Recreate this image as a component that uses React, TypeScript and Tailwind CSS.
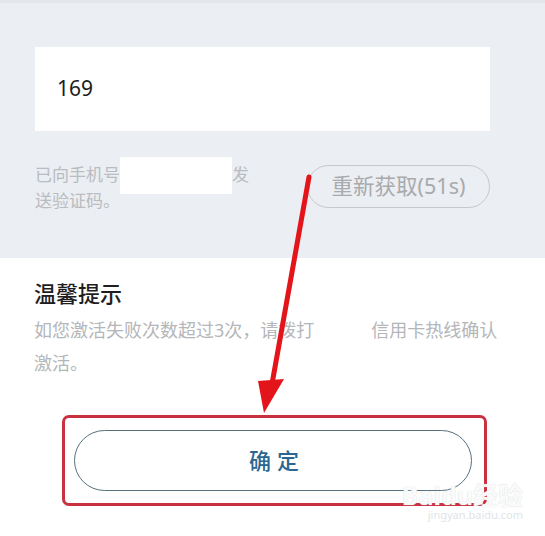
import React from "react";

export default function App() {
  return (
    <div
      className="relative w-[545px] h-[536px] overflow-hidden bg-white"
      style={{ fontFamily: '"Noto Sans", "Noto Sans CJK SC", sans-serif' }}
    >
      {/* verification code section */}
      <section className="h-[258px] bg-[#ebeef2] border-t-[3px] border-[#e4e6e9] pt-[44px] pl-[35px] pr-[55px]">
        <div className="h-[84px] bg-white flex items-center pl-[22px]">
          <span className="text-[21px] text-[#1c1c1c]">169</span>
        </div>

        <div className="mt-[31px] flex justify-between items-start">
          <div className="text-[17px] leading-[26px] text-[#b9bcc0]">
            <div className="flex items-center">
              <span>已向手机号</span>
              <span className="w-[112px] h-[37px] -my-[6px] bg-white" />
              <span>发</span>
            </div>
            <div>送验证码。</div>
          </div>
          <button className="mt-[3px] w-[183px] h-[43px] rounded-full border-[1.5px] border-[#c6c8cb] text-[21.5px] font-normal text-[#a8aaad]">
            重新获取(51s)
          </button>
        </div>
      </section>

      {/* tip section */}
      <section className="px-[34px] pt-[20px]">
        <h2 className="text-[22px] leading-[30px] font-medium text-[#1e1e1e]">温馨提示</h2>
        <p className="mt-[6px] text-[18px] leading-[33px] text-[#b4b6b9]">
          如您激活失败次数超过3次，请拨打
          <span className="inline-block w-[57px]" />
          信用卡热线确认激活。
        </p>

        <div className="mt-[35px] ml-[28px] w-[425px] rounded-[7px] border-[3px] border-[#c9313f] pt-[12px] pl-[9px] pr-[12px] pb-[12px]">
          <button className="w-full h-[61px] rounded-full border-[1.5px] border-[#55727d] text-[22px] font-medium tracking-[6px] pl-[8px] text-[#2b6690]">
            确定
          </button>
        </div>
      </section>

      {/* watermark */}
      <div className="absolute right-[22px] bottom-[14px] flex flex-col items-end text-white/90 select-none">
        <span className="text-[25px] font-bold leading-none [text-shadow:0_0_1px_#c8cdd2]">Baidu经验</span>
        <span className="text-[11px] leading-[14px] text-[#e1e4e8]">jingyan.baidu.com</span>
      </div>

      {/* red annotation arrow */}
      <svg className="absolute inset-0 pointer-events-none" width="545" height="536" viewBox="0 0 545 536">
        <line x1="309" y1="177" x2="272" y2="384" stroke="#e4141b" strokeWidth="5" strokeLinecap="round" />
        <polygon points="258,381 284,379 264,413" fill="#e4141b" />
      </svg>
    </div>
  );
}
